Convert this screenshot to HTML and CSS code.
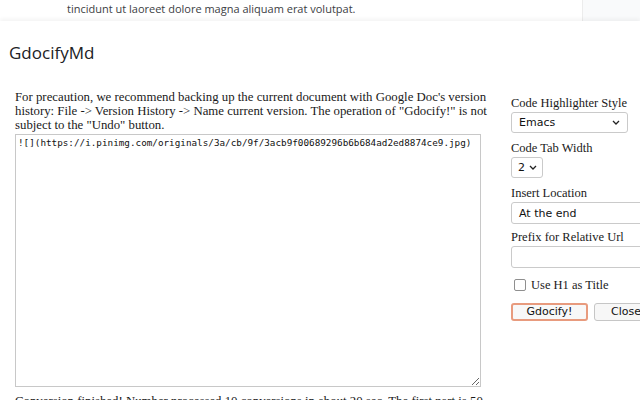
FILE: index.html
```html
<!DOCTYPE html>
<html>
<head>
<meta charset="utf-8">
<link rel="stylesheet" href="styles.css">
</head>
<body>
<div class="doc">
  <div class="doc-page"><p class="doc-text">tincidunt ut laoreet dolore magna aliquam erat volutpat.</p></div>
  <div class="doc-side"></div>
</div>
<div class="dialog">
  <h1 class="title">GdocifyMd</h1>
  <div class="content">
    <div class="main">
      <p class="note">For precaution, we recommend backing up the current document with Google Doc's version history: File -&gt; Version History -&gt; Name current version. The operation of "Gdocify!" is not subject to the "Undo" button.</p>
      <textarea class="source">![](https://i.pinimg.com/originals/3a/cb/9f/3acb9f00689296b6b684ad2ed8874ce9.jpg)</textarea>
      <p class="status">Conversion finished! Number processed 10 conversions in about 20 sec. The first part is 50</p>
    </div>
    <div class="side">
      <label class="label">Code Highlighter Style</label>
      <div class="select w-style"><span>Emacs</span><svg class="chev" viewBox="0 0 8 5" width="8" height="5"><path d="M1 1l3 3 3-3" fill="none" stroke="#222" stroke-width="1.3"/></svg></div>
      <label class="label">Code Tab Width</label>
      <div class="select w-tab"><span>2</span><svg class="chev" viewBox="0 0 8 5" width="8" height="5"><path d="M1 1l3 3 3-3" fill="none" stroke="#222" stroke-width="1.3"/></svg></div>
      <label class="label">Insert Location</label>
      <div class="select w-wide loc"><span>At the end</span></div>
      <label class="label">Prefix for Relative Url</label>
      <div class="input w-wide"></div>
      <div class="check-row"><span class="box"></span><span class="check-label">Use H1 as Title</span></div>
      <div class="buttons">
        <button class="btn primary">Gdocify!</button>
        <button class="btn">Close</button>
      </div>
    </div>
  </div>
</div>
</body>
</html>
```
FILE: styles.css
```css
html, body {
  margin: 0;
  padding: 0;
  width: 640px;
  height: 400px;
  overflow: hidden;
  background: #fff;
}
.doc {
  display: flex;
  height: 21px;
  background: #fff;
}
.doc-page {
  flex: 0 0 582px;
  border-right: 1px solid #ececec;
}
.doc-side {
  flex: 1;
  background: #f9fafb;
}
.doc-text {
  margin: 0;
  padding: 2px 0 0 67px;
  font-family: "Open Sans", Arial, sans-serif;
  font-size: 11px;
  color: #3c4043;
  line-height: 14px;
}
.dialog {
  background: #fff;
  box-shadow: 0 -2px 4px rgba(0,0,0,0.05);
  padding: 20px 0 0 0;
  position: relative;
}
.title {
  margin: 0;
  padding-left: 9px;
  font-family: "Open Sans", Roboto, sans-serif;
  font-weight: 400;
  font-size: 17px;
  line-height: 24px;
  color: #202124;
}
.content {
  display: flex;
  gap: 16px;
  padding: 25px 0 0 15px;
}
.main {
  flex: 0 0 480px;
  min-width: 0;
}
.note {
  margin: 0 0 2px;
  font-family: "Liberation Serif", serif;
  font-size: 12.8px;
  line-height: 14px;
  color: #1a1a1a;
}
.source {
  display: block;
  box-sizing: border-box;
  width: 466px;
  height: 253px;
  margin: 0;
  padding: 2px 2px;
  border: 1px solid #c8c8c8;
  font-family: "DejaVu Sans Mono", monospace;
  font-size: 9.3px;
  line-height: 11px;
  color: #111;
  resize: both;
}
.status {
  margin: 7px 0 0;
  font-family: "Liberation Serif", serif;
  font-size: 12.8px;
  line-height: 14px;
  color: #1a1a1a;
}
.side {
  display: flex;
  flex-direction: column;
  align-items: flex-start;
  padding-top: 6px;
  flex: 1;
  min-width: 0;
}
.label {
  font-family: "Liberation Serif", serif;
  font-size: 12.5px;
  line-height: 14px;
  color: #1a1a1a;
  margin-bottom: 2px;
}
.select, .input {
  box-sizing: border-box;
  height: 21px;
  border: 1px solid #cacaca;
  border-radius: 3px;
  background: #fff;
  display: flex;
  align-items: center;
  justify-content: space-between;
  padding: 0 7px 0 7px;
  font-family: "DejaVu Sans", sans-serif;
  font-size: 11px;
  color: #111;
  margin-bottom: 8px;
}
.w-style { width: 117px; }
.w-tab { width: 32px; padding: 0 5px 0 6px; }
.w-wide { width: 140px; height: 22px; }
.loc { margin-bottom: 6px; }
.input { margin-bottom: 10px; }
.chev { display: block; }
.check-row {
  display: flex;
  align-items: center;
  gap: 5px;
  padding-left: 3px;
  margin-bottom: 11px;
}
.box {
  box-sizing: border-box;
  width: 12px;
  height: 12px;
  border: 1px solid #8f8f8f;
  border-radius: 2px;
  background: #fff;
}
.check-label {
  font-family: "Liberation Serif", serif;
  font-size: 12.5px;
  line-height: 14px;
  color: #1a1a1a;
}
.buttons {
  display: flex;
  gap: 6px;
}
.btn {
  box-sizing: border-box;
  height: 18px;
  padding: 0 16px;
  border: 1px solid #c6c6c6;
  border-radius: 3px;
  background: #f7f7f7;
  font-family: "DejaVu Sans", sans-serif;
  font-size: 11px;
  line-height: 14px;
  color: #111;
  flex: 0 0 auto;
  white-space: nowrap;
}
.btn.primary {
  width: 77px;
  padding: 0;
  border: 2px solid #e89b7e;
  background: #f8f8f8;
}
```
